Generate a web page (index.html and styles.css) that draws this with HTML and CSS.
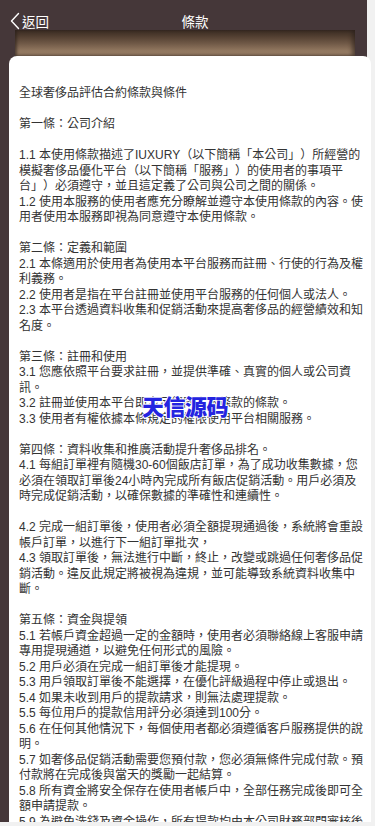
FILE: index.html
```html
<!DOCTYPE html>
<html lang="zh-Hant">
<head>
<meta charset="utf-8">
<meta name="viewport" content="width=device-width, initial-scale=1">
<title>條款</title>
<link rel="stylesheet" href="styles.css">
</head>
<body>
<div class="page">
  <header class="topbar">
    <a class="back" href="#">
      <svg class="chev" width="10" height="18" viewBox="0 0 10 18" aria-hidden="true"><path d="M8.5 1.5 L1.5 9 L8.5 16.5" fill="none" stroke="#ffffff" stroke-width="1.4" stroke-linecap="round" stroke-linejoin="round"/></svg>
      <span>返回</span>
    </a>
    <h1 class="title">條款</h1>
    <span class="spacer"></span>
  </header>
  <div class="band"></div>
  <main class="card">
    <p>全球奢侈品評估合約條款與條件</p>
    <p class="sp">第一條：公司介紹</p>
    <p class="sp">1.1 本使用條款描述了IUXURY（以下簡稱「本公司」）所經營的模擬奢侈品優化平台（以下簡稱「服務」）的使用者的事項平台」）必須遵守，並且這定義了公司與公司之間的關係。</p>
    <p>1.2 使用本服務的使用者應充分瞭解並遵守本使用條款的內容。使用者使用本服務即視為同意遵守本使用條款。</p>
    <p class="sp">第二條：定義和範圍</p>
    <p>2.1 本條適用於使用者為使用本平台服務而註冊、行使的行為及權利義務。</p>
    <p>2.2 使用者是指在平台註冊並使用平台服務的任何個人或法人。</p>
    <p>2.3 本平台透過資料收集和促銷活動來提高奢侈品的經營績效和知名度。</p>
    <p class="sp">第三條：註冊和使用</p>
    <p>3.1 您應依照平台要求註冊，並提供準確、真實的個人或公司資訊。</p>
    <p>3.2 註冊並使用本平台即表示您同意本條款的條款。</p>
    <p>3.3 使用者有權依據本條規定的權限使用平台相關服務。</p>
    <p class="sp">第四條：資料收集和推廣活動提升奢侈品排名。</p>
    <p>4.1 每組訂單裡有隨機30-60個飯店訂單，為了成功收集數據，您必須在領取訂單後24小時內完成所有飯店促銷活動。用戶必須及時完成促銷活動，以確保數據的準確性和連續性。</p>
    <p class="sp">4.2 完成一組訂單後，使用者必須全額提現通過後，系統將會重設帳戶訂單，以進行下一組訂單批次，</p>
    <p>4.3 領取訂單後，無法進行中斷，終止，改變或跳過任何奢侈品促銷活動。違反此規定將被視為違規，並可能導致系統資料收集中斷。</p>
    <p class="sp">第五條：資金與提領</p>
    <p>5.1 若帳戶資金超過一定的金額時，使用者必須聯絡線上客服申請專用提現通道，以避免任何形式的風險。</p>
    <p>5.2 用戶必須在完成一組訂單後才能提現。</p>
    <p>5.3 用戶領取訂單後不能選擇，在優化評級過程中停止或退出。</p>
    <p>5.4 如果未收到用戶的提款請求，則無法處理提款。</p>
    <p>5.5 每位用戶的提款信用評分必須達到100分。</p>
    <p>5.6 在任何其他情況下，每個使用者都必須遵循客戶服務提供的說明。</p>
    <p>5.7 如奢侈品促銷活動需要您預付款，您必須無條件完成付款。預付款將在完成後與當天的獎勵一起結算。</p>
    <p>5.8 所有資金將安全保存在使用者帳戶中，全部任務完成後即可全額申請提款。</p>
    <p>5.9 為避免洗錢及資金操作，所有提款均由本公司財務部門審核後發放。</p>
    <div class="watermark">天信源码</div>
  </main>
</div>
</body>
</html>
```

FILE: styles.css
```css
html, body {
  margin: 0;
  padding: 0;
  background: #f1f1f1;
  height: 826px;
  overflow: hidden;
}

.page {
  width: 367px;
  height: 822px;
  background: #453739;
  overflow-x: visible;
  overflow-y: clip;
  font-family: "Liberation Sans", "Noto Sans CJK TC", sans-serif;
}

.topbar {
  height: 42px;
  display: flex;
  align-items: center;
  padding: 0 0 0 10px;
  color: #ffffff;
}

.back {
  display: flex;
  align-items: center;
  gap: 2px;
  color: #ffffff;
  text-decoration: none;
  font-size: 13.5px;
}

.chev {
  display: block;
}

.title {
  flex: 1;
  margin: 0;
  text-align: center;
  font-size: 13.5px;
  font-weight: normal;
}

.spacer {
  width: 26px;
}

.band {
  height: 26px;
  margin: -12px 12px 0 15px;
  background: linear-gradient(to bottom, #3f2f27 0%, #4d3b2e 20%, #6e5745 50%, #927860 80%, #9c826a 100%);
  box-shadow: 2px 0 3px rgba(40, 30, 25, 0.6) inset, -3px 0 4px rgba(40, 30, 25, 0.6) inset;
}

.card {
  position: relative;
  width: 346px;
  margin-left: 9px;
  padding: 30px 6px 20px 10px;
  background: #ffffff;
  border-radius: 8px 8px 0 0;
  color: #333333;
  font-size: 12px;
  line-height: 15.5px;
  text-spacing-trim: space-all;
}

.card p {
  margin: 0;
}

.card p.sp {
  margin-top: 15.5px;
}

.watermark {
  position: absolute;
  left: 133px;
  top: 337px;
  font-family: "Noto Sans CJK SC", sans-serif;
  font-size: 22px;
  font-weight: 900;
  line-height: 24px;
  letter-spacing: -0.5px;
  color: #2424e0;
  text-shadow: 1px 0 0 #fff, -1px 0 0 #fff, 0 1px 0 #fff, 0 -1px 0 #fff;
}
```
